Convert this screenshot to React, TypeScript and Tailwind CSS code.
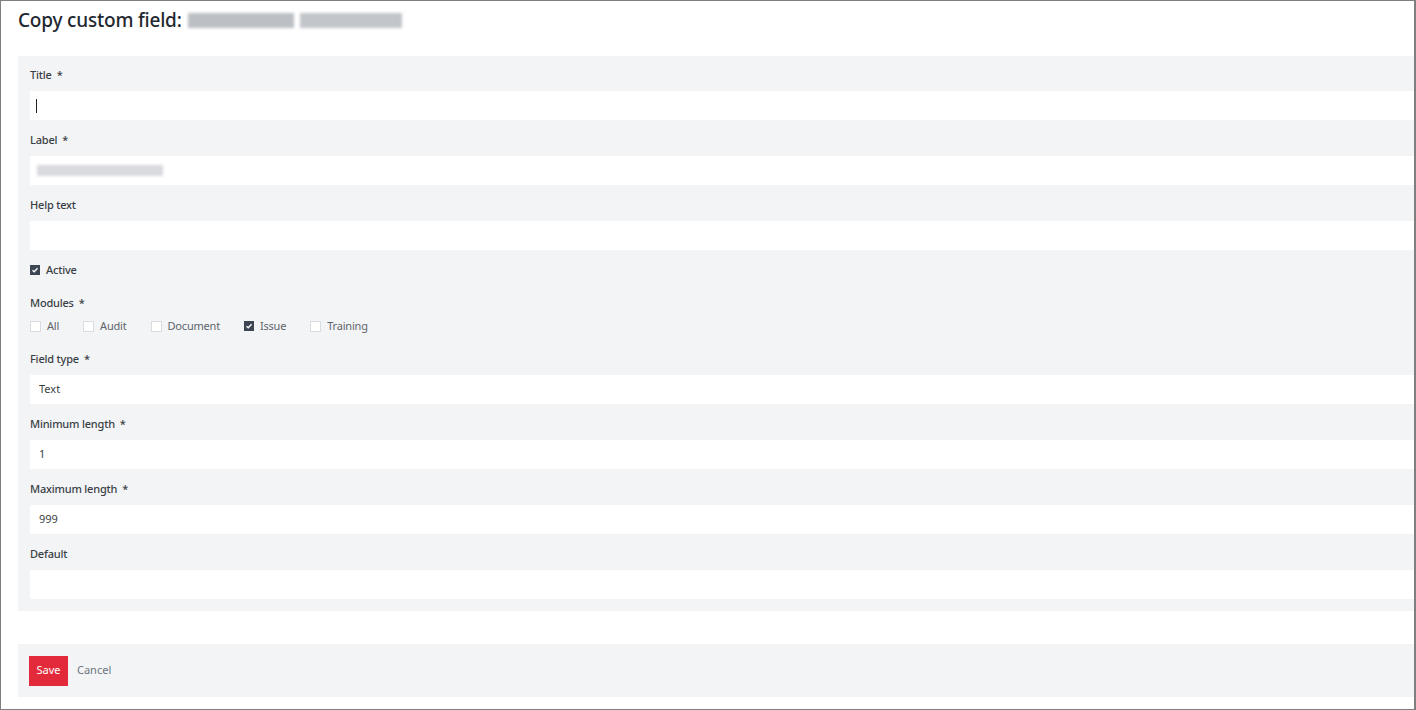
const font = { fontFamily: '"Noto Sans", "Open Sans", sans-serif' }

function Field({ label, required, children }: { label: string; required?: boolean; children?: React.ReactNode }) {
  return (
    <div className="mb-[12px] last:mb-0">
      <div className="h-[16px] leading-[16px] text-[11px] font-medium text-[#3a3f45] mb-[8px] tracking-[-0.2px]">
        {label}
        {required && <span className="ml-[5px]">*</span>}
      </div>
      <div className="h-[29px] bg-white flex items-center pl-[9px] text-[11px] text-[#3a3f45]">{children}</div>
    </div>
  )
}

function Box({ checked }: { checked?: boolean }) {
  if (checked) {
    return (
      <span className="w-[10px] h-[10px] bg-[#3d4753] flex items-center justify-center shrink-0">
        <svg width="8" height="8" viewBox="0 0 8 8">
          <path d="M1.5 4.2 L3.2 5.8 L6.5 2.2" stroke="white" strokeWidth="1.3" fill="none" />
        </svg>
      </span>
    )
  }
  return <span className="w-[11px] h-[11px] bg-white border border-[#d9dce0] shrink-0" />
}

export default function App() {
  const modules = [
    { name: 'All', checked: false },
    { name: 'Audit', checked: false },
    { name: 'Document', checked: false },
    { name: 'Issue', checked: true },
    { name: 'Training', checked: false },
  ]

  return (
    <div style={font} className="w-[1416px] h-[710px] bg-white border border-[#7f7f7f] border-r-2 overflow-hidden">
      <div className="h-[55px] flex items-center pl-[17px] pb-[16px]">
        <h1 className="text-[19px] font-medium text-[#1f2830] tracking-[-0.2px]">Copy custom field:</h1>
        <span className="ml-[6px] flex gap-[6px] blur-[1.5px]">
          <span className="h-[15px] w-[106px] bg-[#bcbfc4]" />
          <span className="h-[15px] w-[102px] bg-[#c2c5ca]" />
        </span>
      </div>

      <div className="ml-[17px] bg-[#f3f4f6] pt-[11px] pl-[12px] pb-[12px] flex flex-col">
        <Field label="Title" required>
          <span className="w-px h-[14px] bg-[#222] -ml-[3px]" />
        </Field>
        <Field label="Label" required>
          <span className="-ml-[2px] h-[11px] w-[126px] bg-[#d8dadd] blur-[1.5px]" />
        </Field>
        <Field label="Help text" />

        <div className="flex items-center gap-[6px] h-[16px] text-[11px] font-medium text-[#3a3f45] tracking-[-0.2px]">
          <Box checked />
          <span>Active</span>
        </div>

        <div className="mt-[17px] h-[16px] leading-[16px] text-[11px] font-medium text-[#3a3f45] tracking-[-0.2px]">
          Modules<span className="ml-[5px]">*</span>
        </div>
        <div className="mt-[7px] h-[16px] flex items-center gap-[24px] text-[11px] text-[#5f656c] mb-[17px] tracking-[-0.2px]">
          {modules.map((m) => (
            <label key={m.name} className="flex items-center gap-[6px]">
              <Box checked={m.checked} />
              <span>{m.name}</span>
            </label>
          ))}
        </div>

        <Field label="Field type" required>
          Text
        </Field>
        <Field label="Minimum length" required>
          1
        </Field>
        <Field label="Maximum length" required>
          999
        </Field>
        <Field label="Default" />
      </div>

      <div className="h-[33px]" />

      <div className="ml-[17px] bg-[#f3f4f6] h-[53px] flex items-center pl-[11px] gap-[9px]">
        <button className="h-[30px] w-[39px] bg-[#e32a3a] text-white text-[11px]">Save</button>
        <span className="text-[11px] text-[#6b7480]">Cancel</span>
      </div>
    </div>
  )
}
